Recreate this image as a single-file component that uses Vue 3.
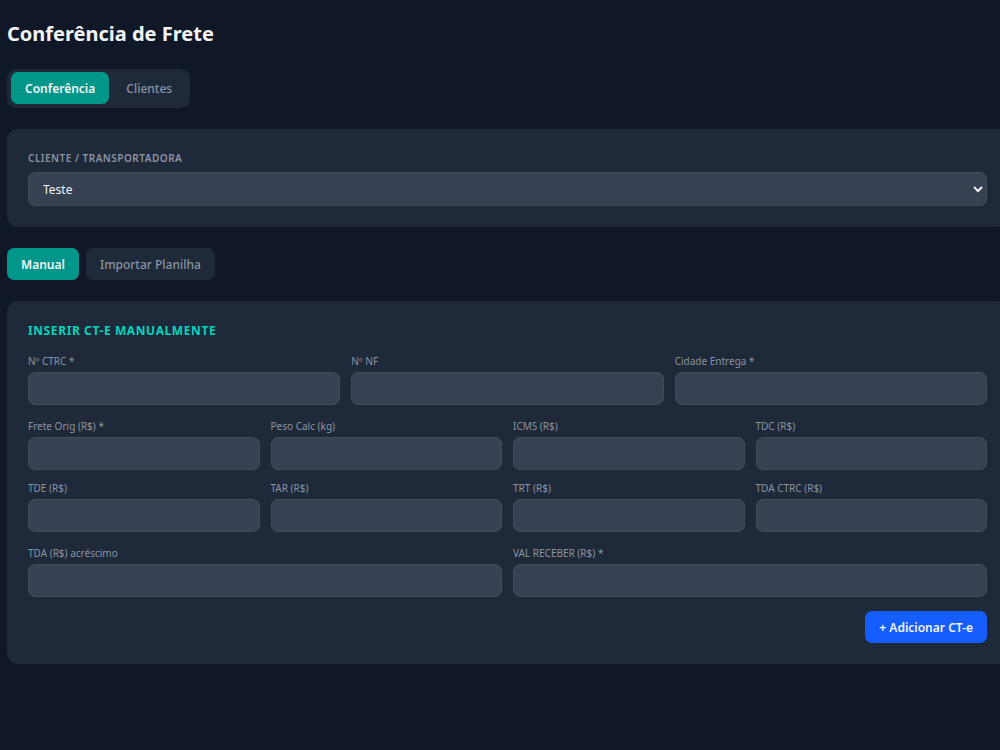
<template>
  <div class="page">
    <main class="content">
      <h1>Conferência de Frete</h1>

      <nav class="tabs">
        <button
          v-for="tab in tabs"
          :key="tab.id"
          type="button"
          class="tab"
          :class="{ active: activeTab === tab.id }"
          @click="activeTab = tab.id"
        >
          {{ tab.label }}
        </button>
      </nav>

      <section class="card client-card">
        <label class="client-label" for="cliente">Cliente / Transportadora</label>
        <select id="cliente" v-model="cliente">
          <option value="teste">Teste</option>
        </select>
      </section>

      <div class="modes">
        <button
          v-for="mode in modes"
          :key="mode.id"
          type="button"
          class="mode"
          :class="{ active: activeMode === mode.id }"
          @click="activeMode = mode.id"
        >
          {{ mode.label }}
        </button>
      </div>

      <form class="card manual-form" @submit.prevent="adicionar">
        <h2>Inserir CT-e manualmente</h2>

        <div v-for="(group, i) in groups" :key="i" class="grid" :class="group.layout">
          <div v-for="field in group.fields" :key="field.id" class="field">
            <label :for="field.id">{{ field.label }}</label>
            <input :id="field.id" v-model="form[field.id]" type="text" />
          </div>
        </div>

        <div class="actions">
          <button type="submit" class="add-button">+ Adicionar CT-e</button>
        </div>
      </form>
    </main>
  </div>
</template>

<script setup>
import { reactive, ref } from 'vue'

const tabs = [
  { id: 'conferencia', label: 'Conferência' },
  { id: 'clientes', label: 'Clientes' },
]
const modes = [
  { id: 'manual', label: 'Manual' },
  { id: 'planilha', label: 'Importar Planilha' },
]
const groups = [
  {
    layout: 'cols-3',
    fields: [
      { id: 'ctrc', label: 'Nº CTRC *' },
      { id: 'nf', label: 'Nº NF' },
      { id: 'cidade', label: 'Cidade Entrega *' },
    ],
  },
  {
    layout: 'cols-4',
    fields: [
      { id: 'frete', label: 'Frete Orig (R$) *' },
      { id: 'peso', label: 'Peso Calc (kg)' },
      { id: 'icms', label: 'ICMS (R$)' },
      { id: 'tdc', label: 'TDC (R$)' },
      { id: 'tde', label: 'TDE (R$)' },
      { id: 'tar', label: 'TAR (R$)' },
      { id: 'trt', label: 'TRT (R$)' },
      { id: 'tdaCtrc', label: 'TDA CTRC (R$)' },
    ],
  },
  {
    layout: 'cols-2',
    fields: [
      { id: 'tda', label: 'TDA (R$) acréscimo' },
      { id: 'receber', label: 'VAL RECEBER (R$) *' },
    ],
  },
]

const activeTab = ref('conferencia')
const activeMode = ref('manual')
const cliente = ref('teste')
const form = reactive({})
const ctes = ref([])

// Store the current values and clear the form
const adicionar = () => {
  ctes.value.push({ ...form })
  Object.keys(form).forEach((key) => (form[key] = ''))
}
</script>

<style>
body {
  background-color: #101828;
}
</style>

<style scoped>
.page {
  min-height: 100vh;
  overflow-x: hidden;
  background-color: #101828;
  color: #f3f4f6;
  font-family: 'Segoe UI', 'Noto Sans', sans-serif;
  font-size: 12px;
}

.content {
  display: flex;
  flex-direction: column;
  gap: 21px;
  margin-right: -8px;
  padding: 20px 0 21px 7px;
}

h1 {
  margin: 0;
  font-size: 20px;
  font-weight: 700;
  line-height: 28px;
}

button,
input,
select {
  font-family: inherit;
  font-size: 12px;
  box-sizing: border-box;
}

button {
  height: 32px;
  padding: 0 14px;
  border: none;
  border-radius: 7px;
  cursor: pointer;
}

.tabs {
  display: flex;
  align-self: flex-start;
  gap: 3px;
  padding: 3px 4px 4px;
  border-radius: 9px;
  background-color: #1e2939;
}

.tab,
.mode {
  background-color: #1e2939;
  color: #8b94a3;
  font-weight: 500;
}

.tab.active,
.mode.active {
  background-color: #009689;
  color: #f3f4f6;
  font-weight: 600;
}

.card {
  padding: 21px;
  border-radius: 11px;
  background-color: #1e2939;
}

.client-card {
  display: flex;
  flex-direction: column;
  gap: 6px;
}

.client-label {
  color: #8b94a3;
  font-size: 10px;
  font-weight: 600;
  letter-spacing: 0.05em;
  line-height: 16px;
  text-transform: uppercase;
}

input,
select {
  width: 100%;
  border: 1px solid #414c5d;
  border-radius: 7px;
  background-color: #364153;
  color: #f3f4f6;
}

input {
  height: 33px;
  padding: 0 11px;
}

select {
  height: 34px;
  padding: 0 2px 0 10px;
}

input:focus,
select:focus {
  outline: none;
  border-color: #009689;
}

.modes {
  display: flex;
  gap: 7px;
}

.manual-form {
  display: flex;
  flex-direction: column;
  gap: 14px;
}

h2 {
  margin: 0;
  color: #00d5be;
  font-size: 12px;
  font-weight: 700;
  letter-spacing: 0.05em;
  line-height: 18px;
  text-transform: uppercase;
}

.grid {
  display: grid;
  gap: 11px;
}

.cols-2 {
  grid-template-columns: repeat(2, 1fr);
}

.cols-3 {
  grid-template-columns: repeat(3, 1fr);
}

.cols-4 {
  grid-template-columns: repeat(4, 1fr);
}

.field {
  display: flex;
  flex-direction: column;
  gap: 4px;
}

.field label {
  color: #8b94a3;
  font-size: 10px;
  line-height: 14px;
}

.actions {
  display: flex;
  justify-content: flex-end;
}

.add-button {
  background-color: #155dfc;
  color: #f3f4f6;
  font-weight: 600;
}
</style>
